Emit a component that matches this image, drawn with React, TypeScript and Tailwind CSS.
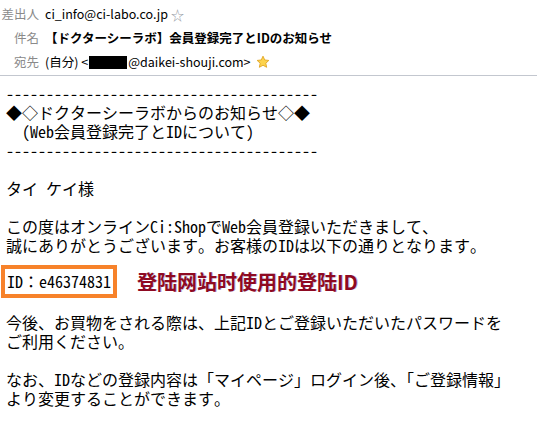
const mono = { fontFamily: '"Noto Sans Mono CJK JP", "Noto Sans CJK JP", monospace' };

function HeaderRow({ label, children }: { label: string; children: React.ReactNode }) {
  return (
    <div className="flex items-center h-6">
      <span className="w-[39px] text-right text-[#8a8a8a] shrink-0">{label}</span>
      <span className="ml-[6px] flex items-center text-black">{children}</span>
    </div>
  );
}

export default function App() {
  return (
    <div className="w-[537px] h-[426px] bg-white overflow-hidden">
      <div
        className="pt-[2px] pb-[1px] border-b border-[#c3c7cf] text-[12.5px] leading-none"
        style={{ fontFamily: '"Noto Sans CJK JP", "Open Sans", sans-serif' }}
      >
        <HeaderRow label="差出人">
          ci_info@ci-labo.co.jp
          <span className="ml-[3px] text-[#9aa0a8] text-[13px]">☆</span>
        </HeaderRow>
        <HeaderRow label="件名">
          <span className="font-bold">【ドクターシーラボ】会員登録完了とIDのお知らせ</span>
        </HeaderRow>
        <HeaderRow label="宛先">
          (自分) &lt;<span className="inline-block w-[38px] h-[13px] bg-black mx-[1px]" />@daikei-shouji.com&gt;
          <svg className="ml-[5px]" width="14" height="14" viewBox="0 0 24 24">
            <path
              d="M12 2l3 6.5 7 .8-5.2 4.8 1.5 7L12 17.6 5.7 21.1l1.5-7L2 9.3l7-.8z"
              fill="#fcd34d"
              stroke="#e0a420"
              strokeWidth="1.5"
              strokeLinejoin="round"
            />
          </svg>
        </HeaderRow>
      </div>

      <div className="pl-[6px] pt-[8px] text-[16px] leading-[19px] text-black" style={mono}>
        <div>---------------------------------------</div>
        <div>◆◇ドクターシーラボからのお知らせ◇◆</div>
        <div>　(Web会員登録完了とIDについて)</div>
        <div>---------------------------------------</div>
        <div className="h-[19px]" />
        <div>タイ ケイ様</div>
        <div className="h-[19px]" />
        <div>この度はオンラインCi:ShopでWeb会員登録いただきまして、</div>
        <div>誠にありがとうございます。お客様のIDは以下の通りとなります。</div>
      </div>

      <div className="flex items-center mt-[10px] ml-[1px]">
        <div className="border-4 border-[#f7822a] px-[2px] py-[3px] text-[16px] leading-[19px]" style={mono}>
          ID：e46374831
        </div>
        <div
          className="ml-[20px] text-[20px] leading-none font-bold text-[#8e0a22]"
          style={{ fontFamily: '"Noto Sans CJK SC", sans-serif', textShadow: '1px 0 0 rgba(40,40,160,0.3)' }}
        >
          登陆网站时使用的登陆ID
        </div>
      </div>

      <div className="pl-[6px] pt-[15px] text-[16px] leading-[19px] text-black" style={mono}>
        <div>今後、お買物をされる際は、上記IDとご登録いただいたパスワードを</div>
        <div>ご利用ください。</div>
        <div className="h-[19px]" />
        <div>なお、IDなどの登録内容は「マイページ」ログイン後、「ご登録情報」</div>
        <div>より変更することができます。</div>
      </div>
    </div>
  );
}
